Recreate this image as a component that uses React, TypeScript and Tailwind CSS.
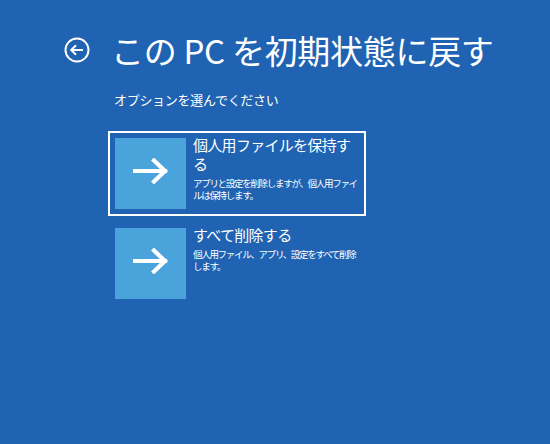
import React from "react";

const font = { fontFamily: '"Noto Sans CJK JP", "Noto Sans", sans-serif' };

function Arrow() {
  return (
    <svg width="36" height="26" viewBox="0 0 36 26" fill="none">
      <path d="M2 13 H32" stroke="white" strokeWidth="4.2" strokeLinecap="square" />
      <path d="M21 2.5 L32 13 L21 23.5" stroke="white" strokeWidth="4.2" strokeLinecap="square" strokeLinejoin="miter" />
    </svg>
  );
}

function Card({ selected, title, desc }: { selected?: boolean; title: React.ReactNode; desc: React.ReactNode }) {
  return (
    <div
      className={`flex w-[258px] h-[85px] border-2 p-[5px] gap-[7px] ${selected ? "border-white" : "border-transparent"}`}
    >
      <div className="w-[71px] h-[71px] shrink-0 bg-[#4ba3dc] flex items-center justify-center pb-[5px]">
        <Arrow />
      </div>
      <div className="flex flex-col -mt-[3px] text-white">
        <div className="text-[15px] leading-[19px] tracking-[-0.7px]">{title}</div>
        <div className="text-[9.5px] leading-[12px] tracking-[-1.3px] mt-[4px]">{desc}</div>
      </div>
    </div>
  );
}

export default function App() {
  return (
    <div className="w-[550px] h-[444px] bg-[#1f63b2] overflow-hidden text-white" style={font}>
      <div className="flex items-center pt-[27px] pl-[64px]">
        <svg width="26" height="26" viewBox="0 0 26 26" fill="none" className="shrink-0">
          <circle cx="13" cy="13" r="11.5" stroke="white" strokeWidth="2" />
          <path d="M19 13 H7.5" stroke="white" strokeWidth="2" />
          <path d="M12 8.2 L7.2 13 L12 17.8" stroke="white" strokeWidth="2" />
        </svg>
        <h1 className="ml-[21px] text-[33px] leading-[46px] tracking-[-0.3px] whitespace-nowrap">
          この PC を初期状態に戻す
        </h1>
      </div>
      <div className="pl-[114px] mt-[19px] text-[13px] leading-[16px] tracking-[-0.3px]">
        オプションを選んでください
      </div>
      <div className="flex flex-col gap-[5px] pl-[108px] mt-[23px]">
        <Card
          selected
          title={<>個人用ファイルを保持す<br />る</>}
          desc={<>アプリと設定を削除しますが、個人用ファイ<br />ルは保持します。</>}
        />
        <Card
          title={<>すべて削除する</>}
          desc={<>個人用ファイル、アプリ、設定をすべて削除<br />します。</>}
        />
      </div>
    </div>
  );
}
